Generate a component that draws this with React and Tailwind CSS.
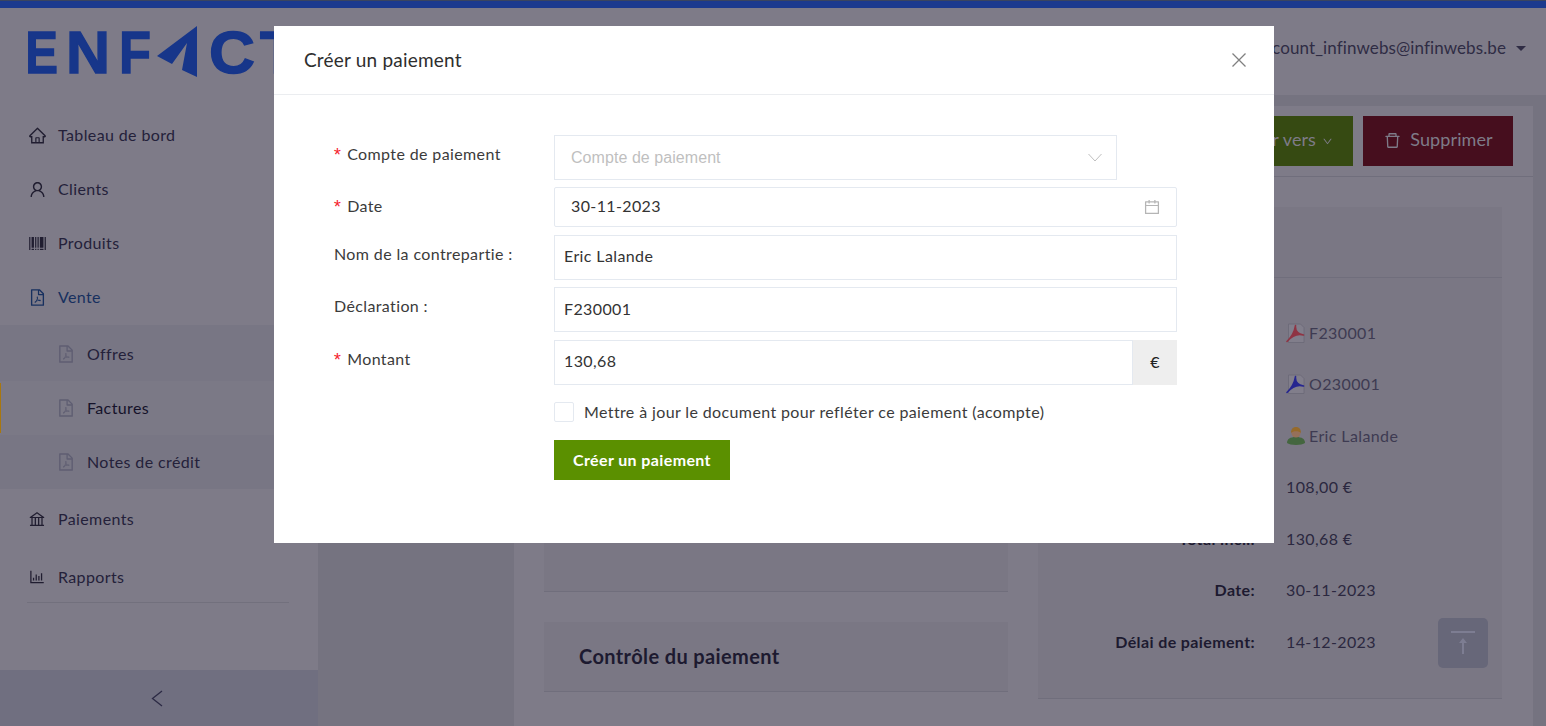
import React from 'react';
import {
  AiOutlineHome,
  AiOutlineUser,
  AiOutlineBarcode,
  AiOutlineFilePdf,
  AiOutlineBank,
  AiOutlineBarChart,
  AiOutlineDelete,
  AiOutlineCalendar,
  AiOutlineDown,
} from 'react-icons/ai';

const MAIN_NAV = [
  { label: 'Tableau de bord', icon: AiOutlineHome },
  { label: 'Clients', icon: AiOutlineUser },
  { label: 'Produits', icon: AiOutlineBarcode },
];

const SUB_NAV = [
  { label: 'Offres' },
  { label: 'Factures', active: true },
  { label: 'Notes de crédit' },
];

function Logo() {
  const letter = { fontFamily: "'Liberation Sans', sans-serif", fontWeight: 700, fontSize: 60, fill: '#17368a', stroke: '#17368a', strokeWidth: 1.4, letterSpacing: 0 };
  return (
    <svg width="290" height="70" viewBox="0 0 290 70" className="block">
      <text x="-3" y="46.5" textLength="33" lengthAdjust="spacingAndGlyphs" style={letter}>E</text>
      <text x="38" y="46.5" textLength="44" lengthAdjust="spacingAndGlyphs" style={letter}>N</text>
      <text x="91" y="46.5" textLength="32" lengthAdjust="spacingAndGlyphs" style={letter}>F</text>
      <polygon points="169,0 169,51 154,44 159,17 144,38 129,30" fill="#17368a" />
      <text x="181" y="46.5" textLength="46" lengthAdjust="spacingAndGlyphs" style={letter}>C</text>
      <text x="232" y="46.5" textLength="38" lengthAdjust="spacingAndGlyphs" style={letter}>T</text>
    </svg>
  );
}

function PdfIcon({ color }) {
  return (
    <svg width="20" height="20" viewBox="0 0 20 20" className="shrink-0">
      <path d="M2.5 1h12l3.5 3.5V19.500H2.500z" fill="#817e8b" stroke="#6a6876" strokeWidth="0.8" />
      <path d="M9.500 2.500c-.5 4.500 2 8.500 8 9.500-5.500-1.500-11 0-16.500 6.500 3.500-3.500 7.500-9 8.500-16z" fill={color} stroke={color} strokeWidth="1.6" strokeLinejoin="round" />
    </svg>
  );
}

function PersonIcon() {
  return (
    <svg width="20" height="20" viewBox="0 0 20 20" className="shrink-0">
      <path d="M1 17c0-4 3-6 9-6s9 2 9 6c-3 2.500-15 2.500-18 0z" fill="#44663f" />
      <circle cx="10" cy="7" r="4.500" fill="#96705a" />
      <path d="M5 7c0-4 2-6 5-6s5 2 5 6c-2-2.500-8-2.500-10 0z" fill="#966a2b" />
    </svg>
  );
}

function Sidebar() {
  return (
    <aside className="relative w-[318px] shrink-0 bg-[#7e7b88] flex flex-col h-[718px]">
      <div className="pl-[28px] pt-[18px] h-[100px]">
        <Logo />
      </div>
      <nav className="text-[16px] text-[#24213a]">
        {MAIN_NAV.map(({ label, icon: Icon }) => (
          <div key={label} className="h-[54px] flex items-center pl-[28px] gap-[11px]">
            <Icon className="text-[19px] text-[#201d30]" />
            <span>{label}</span>
          </div>
        ))}
        <div className="h-[54px] flex items-center pl-[28px] gap-[11px] text-[#17305f]">
          <AiOutlineFilePdf className="text-[19px]" />
          <span>Vente</span>
        </div>
      </nav>
      <div className="bg-[#787684] text-[16px] text-[#24213a] mt-[1px] pt-[2px]">
        {SUB_NAV.map((item) => (
          <div
            key={item.label}
            className={`relative h-[54px] flex items-center pl-[56px] gap-[11px] ${item.active ? 'bg-[#7b7986] text-[#15122a]' : ''}`}
          >
            {item.active && <span className="absolute left-0 top-[2px] w-[1px] h-[50px] bg-[#a8770f]" />}
            <AiOutlineFilePdf className="text-[20px] text-[#5f5e72]" />
            <span>{item.label}</span>
          </div>
        ))}
      </div>
      <nav className="ml-[27px] w-[262px] border-b border-[#72707d] text-[16px] text-[#24213a]">
        <div className="h-[60px] flex items-center gap-[12px] pl-[1px]">
          <AiOutlineBank className="text-[18px] text-[#201d30]" />
          <span>Paiements</span>
        </div>
        <div className="h-[53px] flex items-center gap-[12px] pl-[1px] pt-[3px]">
          <AiOutlineBarChart className="text-[18px] text-[#201d30]" />
          <span>Rapports</span>
        </div>
      </nav>
      <div className="mt-auto h-[56px] bg-[#706f80] flex items-center justify-center pr-[4px]">
        <svg width="12" height="17" viewBox="0 0 12 17" fill="none" stroke="#2c2a44" strokeWidth="1.3">
          <path d="M11 1 1.500 8.500 11 16" />
        </svg>
      </div>
    </aside>
  );
}

function DetailRow({ label, children }) {
  return (
    <div className="h-[51.5px] flex items-center text-[16px]">
      <span className="w-[217px] text-right font-bold text-[#1d1a30]">{label}</span>
      <span className="ml-[31px] flex items-center gap-[3px] text-[#2b283f]">{children}</span>
    </div>
  );
}

function PageBehind() {
  return (
    <main className="flex-1 flex flex-col min-w-0">
      <header className="h-[87px] bg-[#7e7b88] flex justify-end pt-[27px] pr-[20px] text-[17px] tracking-[0.1px] text-[#2f2c44] gap-[10px]">
        <span>account_infinwebs@infinwebs.be</span>
        <span className="mt-[11px] w-0 h-0 border-x-[5.5px] border-x-transparent border-t-[5px] border-t-[#2f2c44]" />
      </header>
      <div className="flex-1 bg-[#757380] pt-[11px] pl-[196px] pr-[13px]">
        <div className="h-[620px] bg-[#7e7b88]">
          <div className="h-[71px] border-b border-[#706e7c] flex justify-end items-start gap-[10px] pt-[10px] pr-[20px] text-[18px] tracking-[0.1px] text-[#7e7b88]">
            <button className="h-[50px] w-[150px] bg-[#364a12] flex items-center justify-end gap-[6px] pr-[20px] pb-[3px] whitespace-nowrap">
              <span className="shrink-0">Transformer vers</span>
              <AiOutlineDown className="text-[11px] shrink-0 translate-y-[2px]" />
            </button>
            <button className="h-[50px] w-[150px] bg-[#460e1e] flex items-center justify-center gap-[8px] pb-[3px]">
              <AiOutlineDelete className="text-[19px] translate-y-[1px]" /> Supprimer
            </button>
          </div>
          <div className="flex gap-[30px] pl-[30px] pt-[30px]">
            <div className="w-[464px] shrink-0">
              <div className="h-[385px] bg-[#7a7784] border-b border-[#706e7c]" />
              <div className="mt-[30px] h-[70px] bg-[#7a7784] border-b border-[#706e7c] flex items-center pl-[35px] pb-[2px] text-[20px] font-bold text-[#1d1a30]">
                Contrôle du paiement
              </div>
              <div className="mt-[26px] pl-[26px] text-[16px] text-[#a8770f]">✓</div>
            </div>
            <div className="w-[464px] shrink-0 h-[492px] bg-[#7a7784] border-b border-[#706e7c]">
              <div className="h-[71px] border-b border-[#706e7c]" />
              <div className="pt-[29px]">
                <DetailRow label="Facture:"><PdfIcon color="#8f3444" /><span className="text-[#3e3b52]">F230001</span></DetailRow>
                <DetailRow label="Offre:"><PdfIcon color="#262690" /><span className="text-[#3e3b52]">O230001</span></DetailRow>
                <DetailRow label="Client:"><PersonIcon /><span className="text-[#3e3b52]">Eric Lalande</span></DetailRow>
                <DetailRow label="Total HTVA:">108,00 €</DetailRow>
                <DetailRow label="Total incl.:">130,68 €</DetailRow>
                <DetailRow label="Date:">30-11-2023</DetailRow>
                <DetailRow label="Délai de paiement:">14-12-2023</DetailRow>
              </div>
            </div>
          </div>
        </div>
      </div>
    </main>
  );
}

function FieldLabel({ required, children }) {
  return (
    <label className="w-[220px] shrink-0 pl-[60px] box-content flex items-center h-[40px] -translate-y-[1px] text-[16px] text-[#3b3b3b] whitespace-nowrap">
      {required && <span className="text-[#f5222d] -ml-[2px] mr-[4px] font-['Liberation_Mono',monospace] text-[18px] leading-none translate-y-[2px]">*</span>}
      {children}
    </label>
  );
}

function PaymentModal() {
  return (
    <div className="fixed inset-0 flex justify-center items-start pt-[26px] pl-[2px]">
      <div className="w-[1000px] h-[517px] bg-white">
        <div className="h-[69px] border-b border-[#ebedf0] flex items-center justify-between pl-[30px] pr-[28px]">
          <h2 className="text-[19px] tracking-[0.2px] text-[#2e2e2e]">Créer un paiement</h2>
          <svg width="14" height="14" viewBox="0 0 14 14" stroke="#808080" strokeWidth="1.300">
            <path d="M.5.5l13 13M13.500.5l-13 13" />
          </svg>
        </div>
        <form className="pt-[40px] pr-[97px]">
          <div className="flex">
            <FieldLabel required>Compte de paiement</FieldLabel>
            <div className="w-[563px] h-[45px] border border-[#e4e9f0] flex items-center justify-between pl-[16px] pr-[14px] font-['Liberation_Sans',sans-serif] tracking-[0.06px] text-[16px] text-[#bfbfbf]">
              Compte de paiement
              <svg width="14" height="9" viewBox="0 0 14 9" fill="none" stroke="#bfbfbf" strokeWidth="1">
                <path d="M.5 1 7 8l6.500-7" />
              </svg>
            </div>
          </div>
          <div className="flex mt-[7px]">
            <FieldLabel required>Date</FieldLabel>
            <div className="flex-1 h-[40px] border border-[#e4e9f0] rounded-[2px] flex items-center justify-between pl-[16px] pr-[15px] pb-[2px] text-[16px] text-[#333]">
              30-11-2023
              <AiOutlineCalendar className="text-[18px] text-[#b5b5b5] translate-y-[1px]" />
            </div>
          </div>
          <div className="flex mt-[8px]">
            <FieldLabel>Nom de la contrepartie{'\u202f'}:</FieldLabel>
            <div className="flex-1 h-[45px] border border-[#e4e9f0] flex items-center pl-[9px] pb-[3px] text-[16px] text-[#333]">Eric Lalande</div>
          </div>
          <div className="flex mt-[7px]">
            <FieldLabel>Déclaration{'\u202f'}:</FieldLabel>
            <div className="flex-1 h-[45px] border border-[#e4e9f0] flex items-center pl-[9px] pb-[2px] text-[16px] text-[#333]">F230001</div>
          </div>
          <div className="flex mt-[8px]">
            <FieldLabel required>Montant</FieldLabel>
            <div className="flex-1 h-[45px] flex">
              <div className="flex-1 border border-[#e4e9f0] flex items-center pl-[9px] pb-[3px] text-[16px] text-[#333]">130,68</div>
              <div className="w-[44px] bg-[#eeeeee] flex items-center justify-center pb-[2px] text-[16px] text-[#222]">€</div>
            </div>
          </div>
          <div className="flex items-center ml-[280px] mt-[15px] gap-[10px] text-[16px] text-[#3b3b3b]">
            <span className="w-[20px] h-[20px] border border-[#e4e9f0] rounded-[2px]" />
            Mettre à jour le document pour refléter ce paiement (acompte)
          </div>
          <button type="button" className="ml-[280px] mt-[16px] w-[176px] h-[40px] bg-[#5b9000] text-white text-[16px] font-bold block">
            Créer un paiement
          </button>
        </form>
      </div>
    </div>
  );
}

export default function App() {
  return (
    <div className="h-screen overflow-hidden bg-[#7e7b88] font-['Lato','Noto_Sans',sans-serif] tracking-[0.38px]">
      <div className="h-[8px] bg-[#1c3a8e] border-t border-[#3a4560]" />
      <div className="flex">
        <Sidebar />
        <PageBehind />
      </div>
      <button className="fixed left-[1438px] top-[618px] w-[50px] h-[50px] rounded-[5px] bg-[#676779] flex items-center justify-center">
        <svg width="24" height="24" viewBox="0 0 24 24" fill="#7d7d92">
          <rect x="0" y="0" width="24" height="2" />
          <path d="M12 7l4 5h-3v11h-2V12H8z" />
        </svg>
      </button>
      <PaymentModal />
    </div>
  );
}
